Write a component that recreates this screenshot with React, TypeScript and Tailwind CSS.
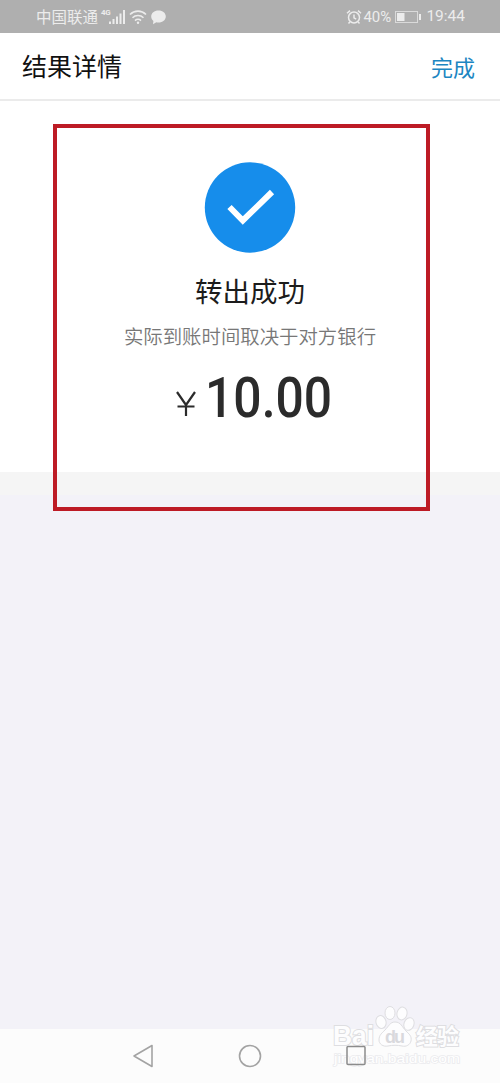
const cjk = "font-['Noto_Sans_CJK_SC',sans-serif]";

function StatusBar() {
  return (
    <div className="flex h-[33px] items-center bg-[#afafaf] pl-[36px] pr-[35px] text-[#ececec]">
      <span className="text-[15.5px] leading-none">中国联通</span>
      <span className="mb-2 ml-[3px] font-['Roboto',sans-serif] text-[8px] font-bold leading-none tracking-tighter">4G</span>
      <svg className="-ml-px" width="17" height="16" viewBox="0 0 17 16" fill="currentColor">
        <rect x="0" y="12.5" width="2" height="2.5" />
        <rect x="3.5" y="10" width="2" height="5" />
        <rect x="7" y="7.5" width="2" height="7.5" />
        <rect x="10.5" y="4.5" width="2" height="10.5" />
        <rect x="14" y="1" width="2" height="14" />
      </svg>
      <svg className="ml-[3px]" width="18" height="16" viewBox="0 0 18 16" fill="none" stroke="currentColor" strokeWidth="1.6">
        <path d="M1 5.5C5.5 1 12.5 1 17 5.5M3.5 8.7c3-3 8-3 11 0M6 11.6c1.7-1.6 4.3-1.6 6 0" />
        <circle cx="9" cy="13.7" r="1.2" fill="currentColor" stroke="none" />
      </svg>
      <svg className="ml-[3px]" width="17" height="16" viewBox="0 0 17 16" fill="currentColor">
        <path d="M8.5 1.5c4.2 0 7.3 2.6 7.3 6s-3.1 6-7.3 6c-.8 0-1.5-.1-2.2-.3L3 15.2l.4-3.2C2 10.9 1.2 9.3 1.2 7.5c0-3.4 3.1-6 7.3-6z" />
      </svg>
      <div className="ml-auto flex items-center pt-px font-['Roboto',sans-serif]">
        <svg width="16" height="16" viewBox="0 0 16 16" fill="none" stroke="currentColor" strokeWidth="1.5">
          <circle cx="8" cy="8.5" r="5.5" />
          <path d="M8 5.5v3.300l2.200 1.300M1 4.200l3-2.600M15 4.200l-3-2.600M3.800 13l-1.300 1.500M12.200 13l1.300 1.500" />
        </svg>
        <span className="ml-px w-[29px] text-[15px] leading-none">40%</span>
        <svg className="ml-[3px]" width="27" height="14" viewBox="0 0 27 14">
          <rect x="0.5" y="1.5" width="22" height="11" fill="none" stroke="currentColor" strokeOpacity="0.7" />
          <rect x="2" y="3" width="7.5" height="8" fill="currentColor" />
          <rect x="24" y="4" width="2" height="6" fill="currentColor" />
        </svg>
        <span className="ml-[4px] text-[15.5px] leading-none">19:44</span>
      </div>
    </div>
  );
}

function Header() {
  return (
    <header className="flex h-[68px] items-center justify-between border-b-2 border-[#ebebeb] pb-px pl-[22px] pr-[25px]">
      <h1 className="text-[25px] leading-none text-[#111111]">结果详情</h1>
      <button className="text-[22px] leading-none text-[#1c86c2]">完成</button>
    </header>
  );
}

function Result() {
  return (
    <section className="flex h-[371px] flex-col items-center pt-[61px]">
      <svg width="92" height="92" viewBox="0 0 92 92">
        <circle cx="46" cy="45.5" r="45.2" fill="#168deb" />
        <path d="M25.500 45l13.300 13.500L68 30" fill="none" stroke="#fff" strokeWidth="6" />
      </svg>
      <h2 className="mt-[20px] text-[27.5px] leading-[32px] text-[#1c1c1c]">转出成功</h2>
      <p className="mt-[18px] text-[19.4px] font-[350] leading-[24px] text-[#777777]">实际到账时间取决于对方银行</p>
      <div className="mt-[18px] flex items-baseline pl-[6px] font-['Roboto',sans-serif] leading-[64px] text-[#2b2b2b]">
        <svg className="mr-[9px]" width="20" height="26" viewBox="0 0 20 26" fill="none" stroke="currentColor" strokeWidth="2.200">
          <path d="M1 1l9 13 9-13M10 13.500V25M1.500 15.500h17" />
        </svg>
        <span className="w-[126px] origin-left scale-x-[0.89] text-[56px] font-medium">10.00</span>
      </div>
    </section>
  );
}

function Watermark() {
  return (
    <svg className="absolute -top-[29px] left-[326px]" width="144" height="70" viewBox="0 0 144 70">
      <g fill="#fdfdfe" stroke="#dedee1" strokeWidth="1">
        <ellipse cx="55" cy="22" rx="5" ry="6.5" transform="rotate(-15 55 22)" />
        <ellipse cx="64" cy="13" rx="5" ry="6.5" />
        <ellipse cx="76" cy="13.5" rx="5" ry="6.5" transform="rotate(12 76 13.5)" />
        <ellipse cx="83" cy="24" rx="5" ry="6.5" transform="rotate(20 83 24)" />
        <path d="M69 22c6 0 7 5 11 9 3 3 6 5 5 10-1 4-5 6-9 5-5-1-9-1-14 0-5 1-9-2-9-6 0-5 3-7 6-10 4-4 5-8 10-8z" />
        <g paintOrder="stroke" strokeWidth="2" fontFamily="'Liberation Sans', sans-serif" fontWeight="700">
          <text x="7" y="45" fontSize="28" textLength="41" lengthAdjust="spacingAndGlyphs">Bai</text>
          <text x="90" y="44" fontSize="22" textLength="43" fontFamily="'Noto Sans CJK SC', sans-serif">经验</text>
        </g>
        <text x="59" y="43" fontSize="18" textLength="20" fill="#d9d9dd" stroke="none" fontFamily="'Liberation Sans', sans-serif" fontWeight="700">du</text>
      </g>
      <text x="8" y="63" fontSize="13" textLength="126" lengthAdjust="spacingAndGlyphs" fill="#ffffff" stroke="#ebebee" strokeWidth="1.5" paintOrder="stroke" fontFamily="'Liberation Sans', sans-serif">jingyan.baidu.com</text>
    </svg>
  );
}

function NavBar() {
  return (
    <nav className="relative h-[54px] bg-[#fcfcfc]">
      <Watermark />
      <div className="relative flex justify-between pl-[132px] pr-[133px] pt-[15px] text-[#a3a3a3]">
        <svg width="22" height="24" viewBox="0 0 22 24" fill="none" stroke="currentColor" strokeWidth="1.6" strokeLinejoin="round">
          <path d="M2 12L20 1.500v21z" />
        </svg>
        <svg width="24" height="24" viewBox="0 0 24 24" fill="none" stroke="currentColor" strokeWidth="1.6">
          <circle cx="12" cy="12" r="10.5" />
        </svg>
        <svg width="22" height="24" viewBox="0 0 22 24" fill="none" stroke="#8c8c8c" strokeWidth="1.5">
          <rect x="2" y="2.5" width="18" height="18" rx="1" />
        </svg>
      </div>
    </nav>
  );
}

export default function App() {
  return (
    <div className={`relative flex h-[1083px] w-[500px] flex-col overflow-hidden bg-white ${cjk}`}>
      <StatusBar />
      <Header />
      <Result />
      <div className="h-[23px] bg-[#f5f5f5]" />
      <main className="flex-1 bg-[#f3f2f8]" />
      <NavBar />
      {/* Highlight frame around the result */}
      <div className="absolute left-[53px] top-[124px] h-[387px] w-[377px] border-4 border-[#bd1b25]" />
    </div>
  );
}
